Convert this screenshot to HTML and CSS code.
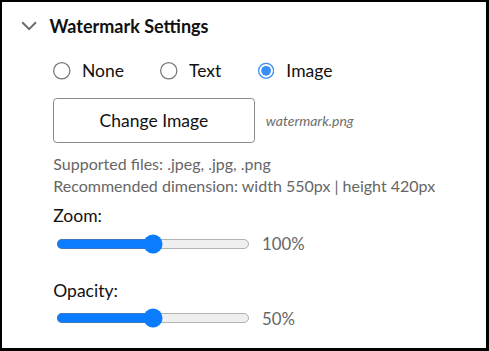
FILE: index.html
```html
<!DOCTYPE html>
<html lang="en">
<head>
  <meta charset="UTF-8" />
  <meta name="viewport" content="width=device-width, initial-scale=1.0" />
  <title>Watermark Settings</title>
  <link rel="stylesheet" href="styles.css">
</head>
<body>
  <div class="frame">
    <div class="panel">
      <div class="header">
        <svg class="chevron" width="13" height="8" viewBox="0 0 13 8">
          <polyline points="1,1 6.5,6.5 12,1" fill="none" stroke="#6b6b6b" stroke-width="1.6" />
        </svg>
        <h2>Watermark Settings</h2>
      </div>

      <div class="content">
        <div class="radios">
          <label class="radio"><input type="radio" name="wm" /> None</label>
          <label class="radio"><input type="radio" name="wm" /> Text</label>
          <label class="radio"><input type="radio" name="wm" checked /> Image</label>
        </div>

        <div class="upload">
          <button class="btn">Change Image</button>
          <span class="filename">watermark.png</span>
        </div>

        <p class="hint">
          Supported files: .jpeg, .jpg, .png<br>
          Recommended dimension: width 550px | height 420px
        </p>

        <div class="slider-group">
          <label for="zoom">Zoom:</label>
          <div class="slider-row">
            <input type="range" id="zoom" min="0" max="200" value="100" />
            <span class="value">100%</span>
          </div>
        </div>

        <div class="slider-group">
          <label for="opacity">Opacity:</label>
          <div class="slider-row">
            <input type="range" id="opacity" min="0" max="100" value="50" />
            <span class="value">50%</span>
          </div>
        </div>
      </div>
    </div>
  </div>
</body>
</html>
```

FILE: styles.css
```css
body {
  margin: 0;
  padding: 0;
  background: #fff;
  font-family: Lato, "Open Sans", sans-serif;
}

.frame {
  width: 489px;
  height: 351px;
  box-sizing: border-box;
  border-style: solid;
  border-color: #000;
  border-width: 2px 3px 3px 2px;
  overflow: hidden;
}

/* the original was captured at 125% */
.panel {
  zoom: 1.25;
  font-size: 14px;
  color: #111;
}

.header {
  display: flex;
  align-items: center;
  padding: 8px 0 0 15px;
  height: 22px;
}

.chevron {
  margin-right: 10px;
  margin-top: 1px;
}

h2 {
  margin: 0;
  font-size: 14.4px;
  font-weight: 700;
  color: #111;
}

.content {
  padding-left: 41px;
}

.radios {
  display: flex;
  gap: 29px;
  margin-top: 14px;
  height: 22px;
  align-items: center;
}

.radio {
  display: flex;
  align-items: center;
  gap: 9px;
  cursor: pointer;
}

.radio input {
  margin: 0;
  width: 14px;
  height: 14px;
  accent-color: #3a8ef6;
}

.upload {
  display: flex;
  align-items: center;
  margin-top: 10.5px;
}

.btn {
  width: 161px;
  height: 36px;
  font-family: inherit;
  font-size: 14px;
  color: #111;
  background: #fff;
  border: 1px solid #8a8a8a;
  border-radius: 3px;
  cursor: pointer;
}

.btn:hover {
  background: #f4f4f4;
}

.filename {
  margin-left: 9px;
  font-style: italic;
  font-size: 11.2px;
  color: #6e6e6e;
}

.hint {
  margin: 8px 0 0;
  font-size: 12.8px;
  line-height: 17.5px;
  color: #666;
}

.slider-group {
  margin-top: 7px;
}

.slider-group label {
  display: block;
  font-size: 14px;
  line-height: 18px;
}

.slider-row {
  display: flex;
  align-items: center;
  height: 23px;
  margin-top: 1.5px;
}

.slider-row input[type="range"] {
  width: 155px;
  margin: 0 2px;
  accent-color: #0a7cff;
}

.value {
  margin-left: 8px;
  font-size: 13.4px;
  color: #666;
}

.slider-group + .slider-group {
  margin-top: 17px;
}
```
